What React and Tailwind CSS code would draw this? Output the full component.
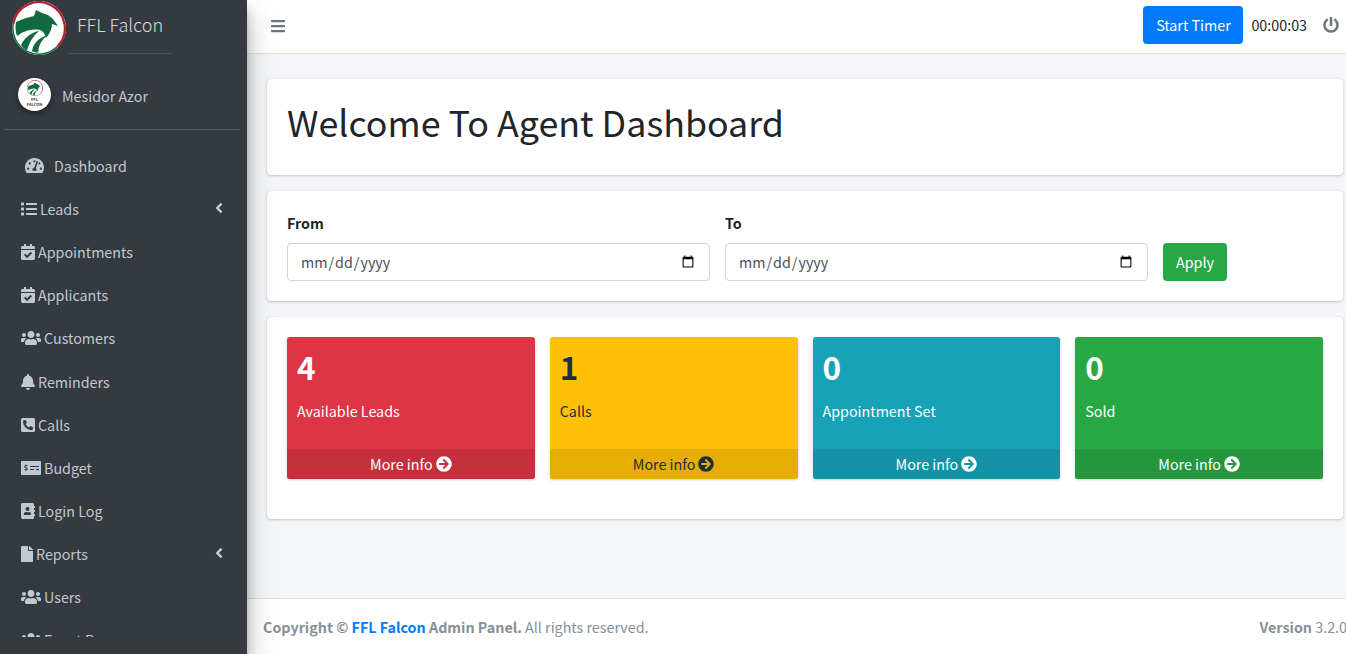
import React from "react";
import { FaTachometerAlt, FaList, FaCalendarCheck, FaUsers, FaBell, FaPhoneSquareAlt, FaMoneyCheckAlt, FaAddressBook, FaFile, FaAngleLeft, FaArrowCircleRight, FaBars, FaPowerOff } from "react-icons/fa";

function Falcon({ bare }) {
  return (
    <svg viewBox="0 0 54 54" className="w-full h-full block">
      {!bare && <circle cx="27" cy="27" r="27" fill="#fff" />}
      <path d="M1.200 23A26 26 0 1 1 45.500 45.300" fill="none" stroke="#b5202f" strokeWidth="2.200" />
      <path d="M45.500 45.300A26 26 0 0 1 1.200 23" fill="none" stroke="#0f6b3f" strokeWidth="1.500" />
      <path d="M4 21C10 18 17 16 22 15L24 9 30 12 36 14 41 18 46 25 40 23C40 28 38 32 34 37 33 32 30 29 25 28.500 17 28 10 31 5 35 3.500 31 3 26 4 21z" fill="#0f6b3f" />
      <path d="M27 30C20 31 12 37 9 44 11 47 13 48.500 15 49.500 17 42 21 35 27 30z" fill="#0f6b3f" />
      <path d="M36 34C30 38 26 45 26.500 51.500 24 51.500 22 51 20 50.500 21 43 26 37 36 34z" fill="#0f6b3f" />
    </svg>
  );
}

const items = [
  { icon: FaList, label: "Leads", arrow: true, size: "w-[16px]" },
  { icon: FaCalendarCheck, label: "Appointments", size: "w-[14px]" },
  { icon: FaCalendarCheck, label: "Applicants", size: "w-[14px]" },
  { icon: FaUsers, label: "Customers", size: "w-[20px]" },
  { icon: FaBell, label: "Reminders", size: "w-[14px]", h: "h-[44px] pt-[1px]" },
  { icon: FaPhoneSquareAlt, label: "Calls", size: "w-[14px]" },
  { icon: FaMoneyCheckAlt, label: "Budget", size: "w-[20px]" },
  { icon: FaAddressBook, label: "Login Log", size: "w-[14px]" },
  { icon: FaFile, label: "Reports", arrow: true, size: "w-[12px]" },
  { icon: FaUsers, label: "Users", size: "w-[20px]" },
  { icon: FaUsers, label: "Event Responses", size: "w-[20px]" },
];

function Box({ bg, foot, text, n, label }) {
  return (
    <div className={`flex-1 h-[142px] rounded-[3px] flex flex-col shadow-[0_1px_3px_rgba(0,0,0,0.2)] ${bg} ${text}`}>
      <div className="flex-1 pl-[10px] pt-[8px]">
        <div className="text-[31.5px] leading-[42px] font-bold">{n}</div>
        <div className="text-[14.3px] leading-[24px] mt-[12px]">{label}</div>
      </div>
      <div className={`h-[30px] flex items-center justify-center gap-[3px] text-[14.3px] rounded-b-[3px] ${foot}`}>
        More info <FaArrowCircleRight className="w-[16px] h-[16px]" />
      </div>
    </div>
  );
}

function DateField({ label }) {
  return (
    <div className="flex-1 flex flex-col">
      <label className="text-[14.3px] font-bold leading-[24px] text-[#212529] mb-[8px]">{label}</label>
      <input type="date" className="h-[38px] w-full border border-[#ced4da] rounded-[4px] px-[12px] text-[14.3px] text-[#495057] bg-white" />
    </div>
  );
}

const card = "bg-white rounded-[4px] shadow-[0_0_1px_rgba(0,0,0,0.13),0_1px_3px_rgba(0,0,0,0.2)]";

export default function App() {
  return (
    <div className="w-[1346px] h-[654px] overflow-hidden flex bg-[#f4f6f9] text-[14.3px]" style={{ fontFamily: "'Noto Sans CJK SC', sans-serif" }}>
      <aside className="w-[247px] shrink-0 h-full bg-[#343a40] relative z-10 overflow-hidden shadow-[0_14px_28px_rgba(0,0,0,0.25),0_10px_10px_rgba(0,0,0,0.22)] flex flex-col">
        <div className="h-[54px] shrink-0 flex pl-[12px] relative">
          <div className="w-[54px] h-[54px] mt-[1px]"><Falcon /></div>
          <span className="ml-[11px] mt-[10px] text-[18px] leading-[28px] font-light text-white/80">FFL Falcon</span>
          <div className="absolute left-[68px] top-[53px] w-[104px] h-px bg-[#4b545c]" />
        </div>
        <div className="h-[76px] shrink-0 mx-[4px] mr-[7px] border-b border-[#4f5962] flex items-start pl-[14px] pt-[25px]">
          <div className="w-[33px] h-[33px] rounded-full bg-white flex flex-col items-center pt-[2px] -mt-[1px] shadow-[0_3px_6px_rgba(0,0,0,0.4)] overflow-hidden text-[#343a40]">
            <div className="w-[16px] h-[16px] shrink-0"><Falcon bare /></div>
            <span className="text-[4px] leading-[6px] font-bold">FFL</span>
            <span className="text-[4px] leading-[5px] font-bold">FALCON</span>
          </div>
          <span className="ml-[11px] text-[#c2c7d0] leading-[34px]">Mesidor Azor</span>
        </div>
        <nav className="flex-1 h-0 text-[#c2c7d0] overflow-hidden mb-[17px]">
          <div className="h-[43px] mt-[14px] flex items-center pl-[25px]">
            <FaTachometerAlt className="w-[19px] h-[19px] text-[#c2c7d0]" />
            <span className="ml-[10px]">Dashboard</span>
          </div>
          {items.map(({ icon: Icon, label, arrow, size, h }) => (
            <div key={label} className={`${h || "h-[43px]"} flex items-center pl-[21px] pr-[21px]`}>
              <Icon className={`${size} h-[16px] shrink-0`} />
              <span className="ml-[3px]">{label}</span>
              {arrow && <FaAngleLeft className="ml-auto w-[14px] h-[16px] -mt-[2px]" />}
            </div>
          ))}
        </nav>
      </aside>

      <div className="flex-1 flex flex-col min-w-0">
        <header className="h-[54px] shrink-0 bg-white border-b border-[#dee2e6] flex items-center pl-[24px]">
          <FaBars className="w-[14px] h-[16px] text-[#6c757d] -mt-[2px]" />
          <div className="ml-auto flex items-center">
            <button className="h-[38px] w-[100px] bg-[#007bff] text-white rounded-[4px] -mt-[4px]">Start Timer</button>
            <span className="ml-[8px] text-[#212529] -mt-[3px]">00:00:03</span>
            <FaPowerOff className="ml-[16px] mr-[7px] w-[16px] h-[16px] text-[#6c757d] -mt-[4px]" />
          </div>
        </header>
        <main className="flex-1 pt-[25px] pl-[20px] pr-[3px] flex flex-col gap-[16px]">
          <section className={`h-[96px] flex items-center px-[20px] pb-[12px] ${card}`}>
            <h1 className="text-[35.8px] leading-[48px] text-[#212529] font-normal">Welcome To Agent Dashboard</h1>
          </section>
          <section className={`h-[110px] px-[20px] pt-[20px] flex items-start ${card}`}>
            <div className="flex gap-[15px] w-[861px]">
              <DateField label="From" />
              <DateField label="To" />
            </div>
            <button className="ml-[15px] mt-[32px] h-[38px] w-[64px] bg-[#28a745] text-white rounded-[4px]">Apply</button>
          </section>
          <section className={`h-[202px] p-[20px] flex items-start gap-[15px] ${card}`}>
            <Box bg="bg-[#dc3545]" foot="bg-[#c62f3e]" text="text-white" n="4" label="Available Leads" />
            <Box bg="bg-[#ffc107]" foot="bg-[#e5ad06]" text="text-[#1f2d3d]" n="1" label="Calls" />
            <Box bg="bg-[#17a2b8]" foot="bg-[#1592a6]" text="text-white" n="0" label="Appointment Set" />
            <Box bg="bg-[#28a745]" foot="bg-[#24963e]" text="text-white" n="0" label="Sold" />
          </section>
        </main>
        <footer className="h-[56px] shrink-0 bg-white border-t border-[#dee2e6] flex items-center pl-[16px] text-[#869099] whitespace-nowrap overflow-hidden">
          <span><b>Copyright © <span className="text-[#007bff]">FFL Falcon</span> Admin Panel.</b> All rights reserved.</span>
          <span className="ml-auto -mr-[1px]"><b>Version</b> 3.2.0</span>
        </footer>
      </div>
    </div>
  );
}
